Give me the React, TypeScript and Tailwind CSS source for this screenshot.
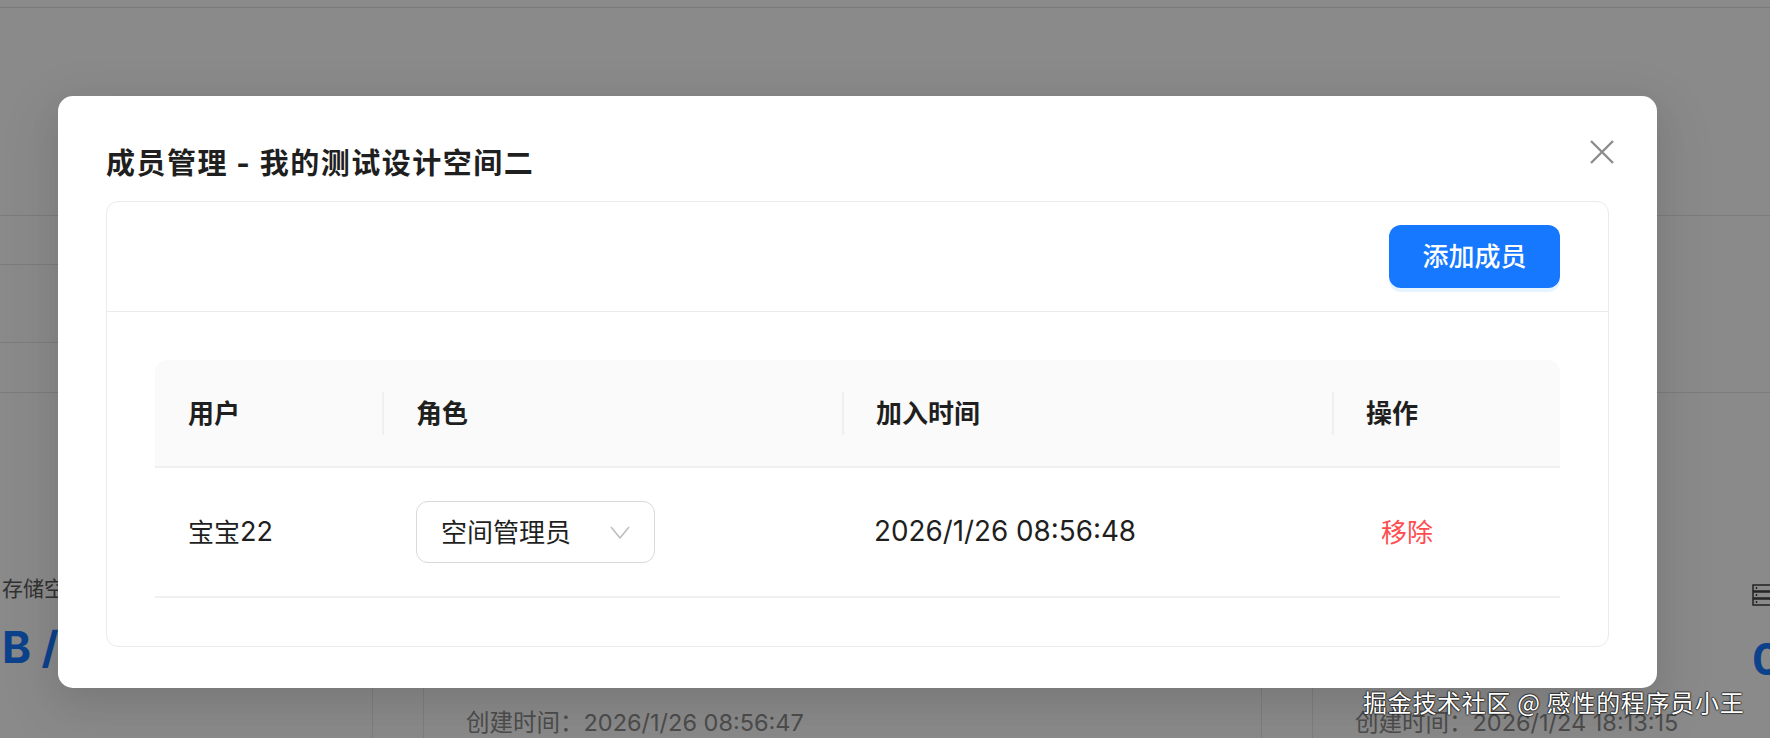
import React from 'react';

const font = { fontFamily: 'Inter, "Noto Sans CJK SC", sans-serif' };

const Chevron: React.FC = () => (
  <svg width="20" height="13" viewBox="0 0 20 13" fill="none">
    <polyline points="1,1 10,12 19,1" stroke="#bfbfbf" strokeWidth="1.6" strokeLinejoin="round" />
  </svg>
);

const CloseIcon: React.FC = () => (
  <svg width="24" height="24" viewBox="0 0 24 24" fill="none">
    <path d="M1 1 L23 23 M23 1 L1 23" stroke="#8c8c8c" strokeWidth="2.4" strokeLinecap="butt" />
  </svg>
);

const DbIcon: React.FC = () => (
  <svg width="22" height="22" viewBox="0 0 22 22" fill="none">
    <rect x="1" y="1" width="20" height="6" stroke="#333" strokeWidth="1.4" />
    <rect x="1" y="8" width="20" height="6" stroke="#333" strokeWidth="1.4" />
    <rect x="1" y="15" width="20" height="6" stroke="#333" strokeWidth="1.4" />
    <circle cx="4.5" cy="4" r="0.9" fill="#333" />
    <circle cx="4.5" cy="11" r="0.9" fill="#333" />
    <circle cx="4.5" cy="18" r="0.9" fill="#333" />
  </svg>
);

const Backdrop: React.FC = () => (
  <div className="flex flex-col h-full bg-[#fbfbfb]">
    <div className="h-[8px] border-b border-[#dcdcdc]" />
    <div className="h-[208px]" />
    <div className="border-t border-[#e2e2e2]" />
    <div className="w-[700px] h-[49px] border-b border-[#e2e2e2]" />
    <div className="w-[700px] h-[78px] border-b border-[#e2e2e2]" />
    <div className="h-[50px] border-b border-[#e2e2e2]" />
    <div className="flex flex-1 mt-[34px]">
      <div className="w-[373px] shrink-0 border-r border-[#e5e5e5] pl-[2px]">
        <div className="mt-[148px] text-[21px] leading-[28px] text-[#595959]">存储空间</div>
        <div className="mt-[18px] text-[44px] leading-[52px] font-bold text-[#1677ff]">B / 10 GB</div>
      </div>
      <div className="ml-[50px] w-[839px] shrink-0 border-x border-[#e5e5e5] px-[42px]">
        <div className="mt-[281px] text-[23.5px] leading-[30px] text-[#8c8c8c] whitespace-nowrap">创建时间：2026/1/26 08:56:47</div>
      </div>
      <div className="ml-[50px] flex-1 border-l border-[#e5e5e5] pl-[42px] flex">
        <div className="w-[397px] shrink-0">
          <div className="mt-[281px] text-[23.5px] leading-[30px] text-[#8c8c8c] whitespace-nowrap">创建时间：2026/1/24 18:13:15</div>
        </div>
        <div className="shrink-0">
          <div className="mt-[152px] flex items-center gap-[8px] whitespace-nowrap">
            <DbIcon />
            <span className="text-[21px] text-[#595959]">存储空间</span>
          </div>
          <div className="mt-[22px] text-[44px] leading-[52px] font-bold text-[#1677ff]">0</div>
        </div>
      </div>
    </div>
  </div>
);

const cols = 'grid grid-cols-[227px_460px_490px_227px]';

const HeaderCell: React.FC<{ label: string; sep?: boolean }> = ({ label, sep }) => (
  <div className="flex items-center">
    {sep ? <div className="w-[2px] h-[43px] bg-[#f0f0f0]" /> : <div className="w-[1px]" />}
    <span className="ml-[32px] text-[26px] font-bold text-[#1f1f1f]">{label}</span>
  </div>
);

const App: React.FC = () => {
  return (
    <div className="relative w-[1770px] h-[738px] overflow-hidden" style={font}>
      <Backdrop />
      <div className="absolute inset-0 bg-black/45" />

      <div className="absolute left-[58px] top-[96px] w-[1599px] h-[592px] bg-white rounded-[15px] px-[48px] pt-[48px] shadow-[0_12px_32px_rgba(0,0,0,0.08),0_18px_56px_16px_rgba(0,0,0,0.05)]">
        <button className="absolute right-[43px] top-[44px]">
          <CloseIcon />
        </button>
        <h2 className="h-[40px] leading-[40px] text-[29px] font-bold tracking-[1.5px] text-[#1f1f1f]">
          成员管理 - 我的测试设计空间二
        </h2>

        <div className="mt-[17px] border border-[#ebebeb] rounded-[12px]">
          <div className="h-[110px] flex items-center justify-end px-[48px] border-b border-[#ebebeb]">
            <button className="w-[171px] h-[63px] rounded-[12px] bg-[#1677ff] text-white text-[26px] font-medium shadow-[0_4px_0_rgba(5,145,255,0.1)]">
              添加成员
            </button>
          </div>

          <div className="p-[48px]">
            <div className={`${cols} h-[108px] bg-[#fafafa] rounded-t-[12px] border-b-2 border-[#f0f0f0]`}>
              <HeaderCell label="用户" />
              <HeaderCell label="角色" sep />
              <HeaderCell label="加入时间" sep />
              <HeaderCell label="操作" sep />
            </div>
            <div className={`${cols} h-[130px] border-b-2 border-[#f0f0f0] text-[26px] text-[#1f1f1f]`}>
              <div className="flex items-center pl-[33px]">
                宝宝<span className="text-[27px]">22</span>
              </div>
              <div className="flex items-center pl-[34px]">
                <div className="w-[239px] h-[62px] border-[1.5px] border-[#d9d9d9] rounded-[12px] flex items-center justify-between pl-[24px] pr-[24px]">
                  <span>空间管理员</span>
                  <Chevron />
                </div>
              </div>
              <div className="flex items-center pl-[32px] text-[27.8px]">2026/1/26 08:56:48</div>
              <div className="flex items-center pl-[49px]">
                <span className="text-[#ff4d4f]">移除</span>
              </div>
            </div>
          </div>
        </div>
      </div>

      <div
        className="absolute left-[1363px] top-[686px] text-[24px] leading-[32px] tracking-[0.7px] text-white whitespace-nowrap"
        style={{
          fontFamily: '"Noto Sans CJK SC", sans-serif',
          textShadow: '1px 0 1px rgba(0,0,0,0.55), -1px 0 1px rgba(0,0,0,0.55), 0 1px 1px rgba(0,0,0,0.55), 0 -1px 1px rgba(0,0,0,0.55)',
        }}
      >
        掘金技术社区 @ 感性的程序员小王
      </div>
    </div>
  );
};

export default App;
